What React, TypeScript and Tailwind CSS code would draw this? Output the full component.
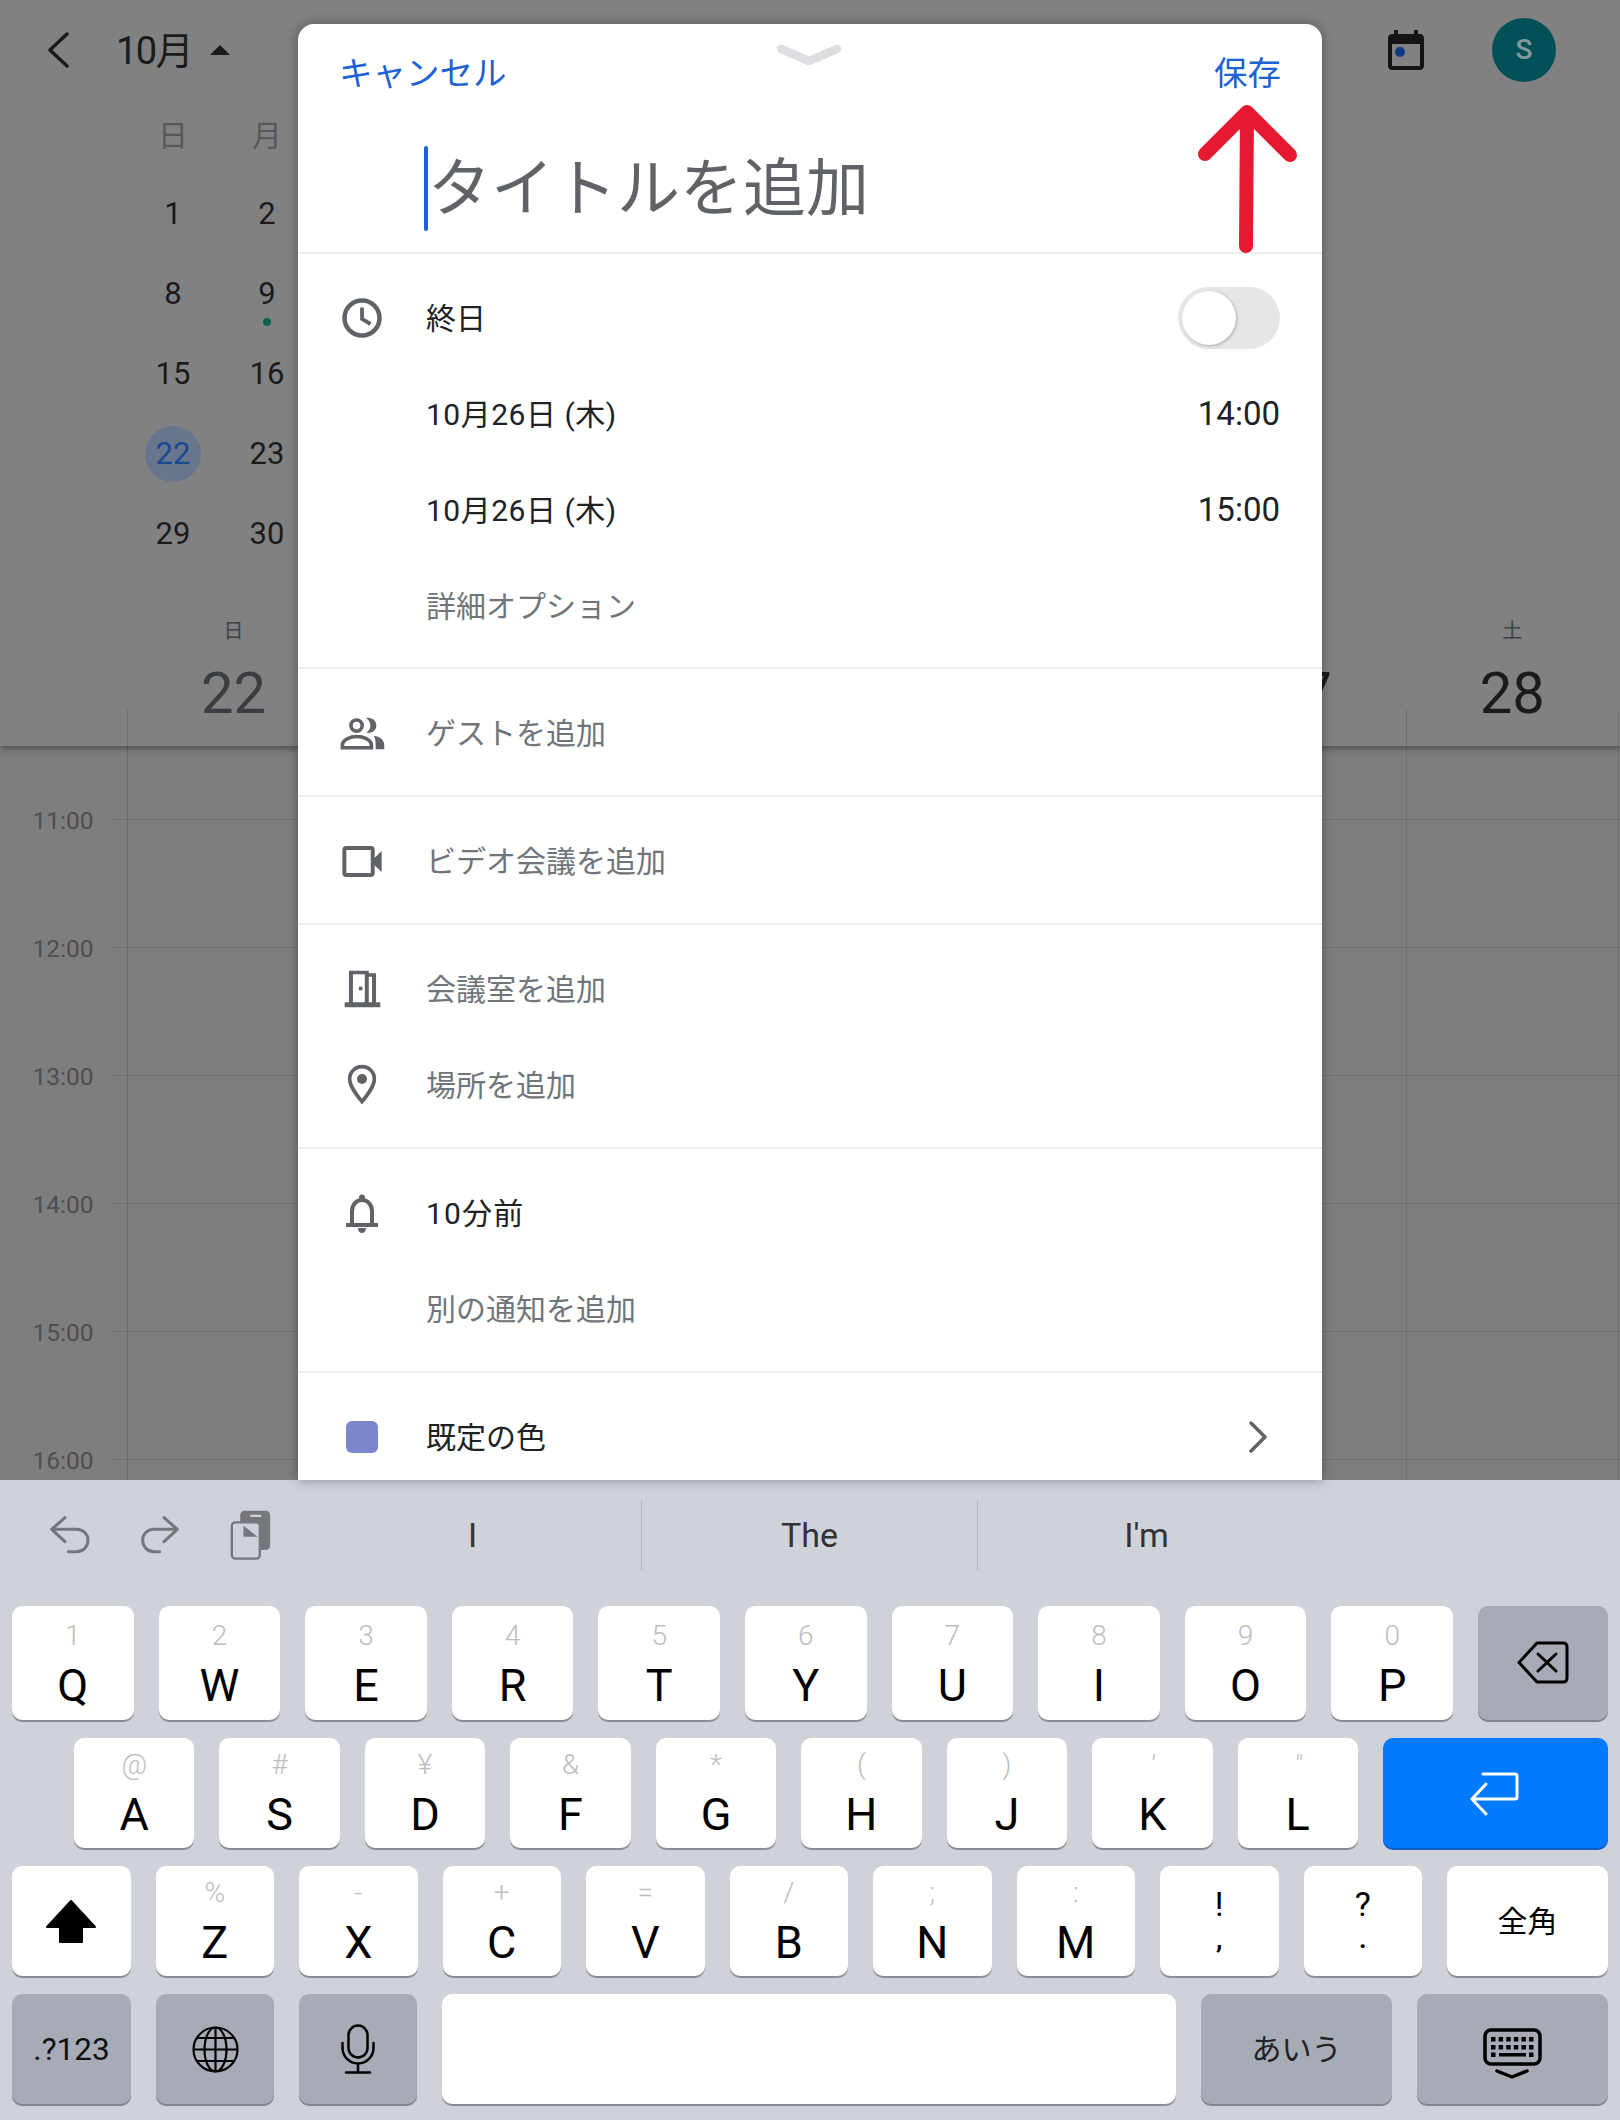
import React from 'react';

const dayNames = ['日', '月'];
const monthDays = [1, 2, 8, 9, 15, 16, 22, 23, 29, 30];
const stripDays = [
  { label: '日', num: '22', color: 'text-[#3a3d42]' },
  { label: '', num: '', color: '' },
  { label: '', num: '', color: '' },
  { label: '', num: '', color: '' },
  { label: '', num: '', color: '' },
  { label: '', num: '27', color: 'text-[#1b1b1b]' },
  { label: '土', num: '28', color: 'text-[#1b1b1b]' },
];
const hours = ['11:00', '12:00', '13:00', '14:00', '15:00', '16:00'];

const Clock = () => (
  <svg width="40" height="40" viewBox="0 0 40 40" fill="none" stroke="#5f6368" strokeWidth="4.500">
    <circle cx="20" cy="20" r="17.500" />
    <path d="M20 9.500V21l8.500 5" strokeWidth="3.800" />
  </svg>
);

const People = () => (
  <svg width="45" height="33" viewBox="28 82 136 100" fill="#5f6368">
    <circle cx="78" cy="108" r="17" fill="none" stroke="#5f6368" strokeWidth="11" />
    <path d="M107 85c18-3 31 9 31 23s-13 25-31 22c9-6 13-14 13-22s-4-17-13-23z" />
    <path d="M35 175v-7c0-18 27-27 44-27s44 9 44 27v7z" fill="none" stroke="#5f6368" strokeWidth="11" />
    <path d="M131 139c17 3 31 12 31 29v12h-26v-14c0-11-2-18-5-27z" />
  </svg>
);

const Video = () => (
  <svg width="42" height="33" viewBox="34 465 125 100" fill="#5f6368">
    <rect x="43" y="474" width="86" height="82" rx="6" fill="none" stroke="#5f6368" strokeWidth="12" />
    <path d="M130 508l26-25v64l-26-25z" />
  </svg>
);

const Door = () => (
  <svg width="37" height="38" viewBox="40 843 112 114" fill="#5f6368">
    <path d="M55 845h60v7h22v88h13v15H42v-15h13zm12 10v85h36v-85zm48 8v77h10v-77z" fillRule="evenodd" />
    <rect x="85" y="893" width="11" height="11" />
  </svg>
);

const Pin = () => (
  <svg width="30" height="42" viewBox="50 1125 90 126" fill="#5f6368">
    <path d="M95 1133c-21 0-37 16-37 37 0 22 21 48 37 68 16-20 37-46 37-68 0-21-16-37-37-37z" fill="none" stroke="#5f6368" strokeWidth="11" />
    <circle cx="95" cy="1170" r="15" />
  </svg>
);

const Bell = () => (
  <svg width="32" height="39" viewBox="0 0 32 39" fill="none" stroke="#5f6368">
    <circle cx="16" cy="3.500" r="3" fill="#5f6368" stroke="none" />
    <path d="M6 30V17C6 10.500 10.500 6 16 6s10 4.500 10 11v13" strokeWidth="4" />
    <path d="M0 31h32" strokeWidth="4" />
    <path d="M12 34h8c0 3-1.800 5-4 5s-4-2-4-5z" fill="#5f6368" stroke="none" />
  </svg>
);

const UndoIcon = () => (
  <svg width="40" height="40" viewBox="60 60 120 120" fill="none" stroke="#75777c" strokeWidth="9" strokeLinecap="round" strokeLinejoin="round">
    <path d="M105 68l-40 35 40 37M65 103h75c20 0 34 14 34 33s-14 34-34 34h-25" />
  </svg>
);

const RedoIcon = () => (
  <svg width="40" height="40" viewBox="330 60 120 120" fill="none" stroke="#75777c" strokeWidth="9" strokeLinecap="round" strokeLinejoin="round">
    <path d="M402 68l40 35-40 37M442 103h-70c-20 0-34 14-34 33s14 34 34 34h17" />
  </svg>
);

const PasteIcon = () => (
  <svg width="41" height="50" viewBox="600 45 122 150">
    <rect x="630" y="47" width="90" height="118" rx="13" fill="#75777c" />
    <rect x="660" y="59" width="33" height="7" rx="2" fill="#cfd2d9" />
    <rect x="605" y="82" width="84" height="109" rx="11" fill="#cfd2d9" stroke="#75777c" strokeWidth="7" />
    <path d="M640 92l42 33h-42z" fill="#75777c" />
  </svg>
);

const Backspace = () => (
  <svg width="52" height="44" viewBox="0 0 52 44" fill="none" stroke="#000" strokeWidth="3" strokeLinecap="round" strokeLinejoin="round">
    <path d="M20 2h26c2.500 0 4 1.500 4 4v31c0 2.500-1.500 4-4 4H20L2 21.500z" />
    <path d="M21 13l18 17M39 13L21 30" />
  </svg>
);

const ReturnIcon = () => (
  <svg width="52" height="45" viewBox="0 0 52 45" fill="none" stroke="#fff" strokeWidth="3" strokeLinecap="round" strokeLinejoin="round">
    <path d="M14 3h32c1.500 0 2 .5 2 2v21c0 1.500-.5 2-2 2H3M17 13L3 28l14 15" />
  </svg>
);

const ShiftIcon = () => (
  <svg width="50" height="43" viewBox="0 0 50 43" fill="#000" stroke="#000" strokeWidth="2" strokeLinejoin="round">
    <path d="M25 1L1 27h13v15h22V27h13z" />
  </svg>
);

const GlobeIcon = () => (
  <svg width="47" height="47" viewBox="0 0 47 47" fill="none" stroke="#000" strokeWidth="2.200">
    <circle cx="23.500" cy="23.500" r="22" />
    <ellipse cx="23.500" cy="23.500" rx="11" ry="22" />
    <path d="M23.500 1.500v44M1.500 23.500h44M5 12h37M5 35h37" />
  </svg>
);

const MicIcon = () => (
  <svg width="34" height="50" viewBox="0 0 34 50" fill="none" stroke="#000" strokeWidth="2.500" strokeLinecap="round">
    <rect x="7.500" y="1.500" width="19" height="32" rx="9.500" />
    <path d="M1.500 19v5a15.500 15.500 0 0 0 31 0v-5M17 39.500V48.500M5 48.500h24" />
  </svg>
);

const KeyboardIcon = () => (
  <svg width="60" height="60" viewBox="0 0 60 60" fill="#000">
    <rect x="2" y="2" width="55" height="34" rx="6" fill="none" stroke="#000" strokeWidth="3.500" />
    {[0, 1, 2, 3, 4, 5].map((i) => (
      <React.Fragment key={i}>
        <rect x={8 + i * 7.6} y="9" width="4.500" height="4.500" />
        <rect x={8 + i * 7.6} y="17" width="4.500" height="4.500" />
      </React.Fragment>
    ))}
    <rect x="8" y="24.500" width="4.500" height="4.500" />
    <rect x="16" y="25" width="27" height="3.500" />
    <rect x="46" y="24.500" width="4.500" height="4.500" />
    <path d="M14 43l15 6 15-6" fill="none" stroke="#000" strokeWidth="3.500" strokeLinecap="round" strokeLinejoin="round" />
  </svg>
);

function Row({ icon, children, right, muted }: { icon?: React.ReactNode; children: React.ReactNode; right?: React.ReactNode; muted?: boolean }) {
  return (
    <div className="flex h-[96px] items-center">
      <div className="flex w-[128px] shrink-0 justify-center">{icon}</div>
      <div className={muted ? 'text-[30px] text-[#70757a]' : 'text-[30px] text-[#202124]'}>{children}</div>
      {right && <div className="ml-auto pr-[42px]">{right}</div>}
    </div>
  );
}

function Key({ hint, main, first, className }: { hint?: string; main: string; first?: boolean; className: string }) {
  const slanted = hint === '′' || hint === '″';
  return (
    <div className={`flex flex-col items-center rounded-[10px] bg-white shadow-[0_2px_0_#8b8c91] ${first ? 'pt-[12px]' : 'pt-[9px]'} ${className}`}>
      <div className={`flex h-[36px] items-center text-[28px] font-light leading-none text-[#bdbdbd] ${slanted ? 'italic' : ''}`}>{hint}</div>
      <div className="flex h-[62px] items-center text-[45px] leading-none text-black">{main}</div>
    </div>
  );
}

function PunctKey({ top, bottom }: { top: string; bottom: string }) {
  return (
    <div className="flex flex-1 flex-col items-center rounded-[10px] bg-white pt-[18px] text-black shadow-[0_2px_0_#8b8c91]">
      <span className="text-[34px] leading-[40px]">{top}</span>
      <span className="text-[26px] font-bold leading-[30px]">{bottom}</span>
    </div>
  );
}

function DarkKey({ className, children }: { className: string; children: React.ReactNode }) {
  return (
    <div className={`flex items-center justify-center rounded-[10px] bg-[#a6abb5] shadow-[0_2px_0_#82858c] ${className}`}>
      {children}
    </div>
  );
}

export default function App() {
  const row1 = [['1', 'Q'], ['2', 'W'], ['3', 'E'], ['4', 'R'], ['5', 'T'], ['6', 'Y'], ['7', 'U'], ['8', 'I'], ['9', 'O'], ['0', 'P']];
  const row2 = [['@', 'A'], ['#', 'S'], ['¥', 'D'], ['&', 'F'], ['*', 'G'], ['(', 'H'], [')', 'J'], ['′', 'K'], ['″', 'L']];
  const row3 = [['%', 'Z'], ['-', 'X'], ['+', 'C'], ['=', 'V'], ['/', 'B'], [';', 'N'], [':', 'M']];

  return (
    <div className="flex h-[2120px] w-[1620px] flex-col overflow-hidden bg-[#7e7e7e] font-['Roboto','Noto_Sans_CJK_JP',sans-serif]">
      <div className="relative h-[1480px] shrink-0">
        {/* calendar behind the sheet */}
        <div className="relative z-10 h-[746px] bg-[#818181] shadow-[0_3px_6px_rgba(0,0,0,0.35)]">
          <div className="flex h-[100px] items-center pl-[47px] pr-[64px]">
            <svg width="22" height="36" viewBox="0 0 22 36" fill="none" stroke="#1b1b1b" strokeWidth="3.500" strokeLinecap="round" strokeLinejoin="round">
              <path d="M20 2L3 18l17 16" />
            </svg>
            <span className="ml-[47px] pt-[3px] text-[38px] tracking-[-1.5px] text-[#1b1b1b]">10月</span>
            <div className="ml-[18px] h-0 w-0 border-x-[10px] border-b-[10px] border-x-transparent border-b-[#1b1b1b]" />
            <svg className="ml-auto" width="36" height="40" viewBox="0 0 36 40" fill="#141414">
              <path d="M6 0h4v4h16V0h4v4h2c2.200 0 4 1.800 4 4v28c0 2.200-1.800 4-4 4H4c-2.200 0-4-1.800-4-4V8c0-2.200 1.800-4 4-4h2zM4 14v22h28V14z" fillRule="evenodd" />
              <circle cx="12" cy="22" r="5" fill="#0f3a85" />
            </svg>
            <div className="ml-[68px] flex h-[64px] w-[64px] items-center justify-center rounded-full bg-[#005057] text-[28px] font-medium text-[#829a9c]">
              S
            </div>
          </div>
          <div className="grid w-[314px] grid-cols-[repeat(2,94px)] pl-[126px]">
            {dayNames.map((d) => (
              <div key={d} className="flex h-[70px] items-center justify-center text-[30px] text-[#55585c]">{d}</div>
            ))}
          </div>
          <div className="grid w-[314px] grid-cols-[repeat(2,94px)] pl-[126px] pt-[4px]">
            {monthDays.map((d) => (
              <div key={d} className="relative flex h-[80px] items-center justify-center text-[31px] text-[#1b1b1b]">
                {d === 22 ? (
                  <div className="flex h-[56px] w-[56px] items-center justify-center rounded-full bg-[#67758d] text-[#1c4a8f]">{d}</div>
                ) : (
                  d
                )}
                {d === 9 && <div className="absolute bottom-[8px] h-[8px] w-[8px] rounded-full bg-[#0b5f55]" />}
              </div>
            ))}
          </div>
        </div>

        <div className="absolute left-0 top-[573px] z-10 w-full pl-[127px]">
          <div className="grid grid-cols-[repeat(7,213.14px)]">
            {stripDays.map((d, i) => (
              <div key={i} className="flex h-[89px] items-end justify-center pb-[16px] text-[20px] text-[#3f4246]">{d.label}</div>
            ))}
            {stripDays.map((d, i) => (
              <div key={i} className={`h-[48px] pt-[1px] text-center text-[58px] leading-[60px] ${d.color}`}>{d.num}</div>
            ))}
            {stripDays.map((d, i) => (
              <div key={i} className={i === 6 ? 'h-[36px] border-x border-[#6f6f6f]' : 'h-[36px] border-l border-[#6f6f6f]'} />
            ))}
          </div>
        </div>

        <div className="relative h-[734px] overflow-hidden pt-[73px]">
          {hours.map((h) => (
            <div key={h} className="flex h-[128px]">
              <div className="-mt-[15px] h-[34px] w-[126px] shrink-0 text-center text-[24.500px] leading-[34px] text-[#4c4f54]">{h}</div>
              <div className="-ml-[13px] flex-1 border-t border-[#6f6f6f]" />
            </div>
          ))}
          <div className="absolute inset-y-0 left-[127px] grid grid-cols-[repeat(7,213.14px)]">
            {stripDays.map((d, i) => (
              <div key={i} className={i === 6 ? 'border-x border-[#6f6f6f]' : 'border-l border-[#6f6f6f]'} />
            ))}
          </div>
        </div>

        {/* event sheet */}
        <div className="absolute bottom-0 left-[298px] top-[24px] z-20 w-[1024px] overflow-hidden rounded-t-[16px] bg-white shadow-[0_0_12px_rgba(0,0,0,0.35)]">
          <div className="relative h-[230px] border-b-2 border-[#ececef]">
            <div className="flex h-[100px] items-center justify-between pl-[41px] pr-[41px] text-[33.500px] text-[#1a62d6]">
              <span>キャンセル</span>
              <span>保存</span>
            </div>
            <svg className="absolute left-[478px] top-[20px]" width="66" height="26" viewBox="0 0 66 26" fill="none" stroke="#dddee2" strokeWidth="8.500" strokeLinecap="round" strokeLinejoin="round">
              <path d="M5 5l28 12 28-12" />
            </svg>
            <div className="flex h-[128px] items-center pl-[126px]">
              <div className="h-[85px] w-[4px] rounded-full bg-[#1a62d6]" />
              <span className="text-[63px] leading-none text-[#5f6368]">タイトルを追加</span>
            </div>
            <svg className="absolute left-[900px] top-[76px]" width="99" height="160" viewBox="0 0 99 160" fill="none" stroke="#e5192f" strokeWidth="14" strokeLinecap="round" strokeLinejoin="round">
              <path d="M7 54l42-42 43 43M49 12l-1 134" />
            </svg>
          </div>

          <div className="border-b-2 border-[#ececef] pb-[13px] pt-[16px]">
            <Row
              icon={<Clock />}
              right={
                <div className="relative h-[62px] w-[102px] rounded-full bg-[#e6e6e8]">
                  <div className="absolute left-[4px] top-[4px] h-[54px] w-[54px] rounded-full bg-white shadow-[1px_1px_3px_rgba(0,0,0,0.25)]" />
                </div>
              }
            >
              終日
            </Row>
            <Row right={<span className="text-[33px] text-[#202124]">14:00</span>}>
              <span className="tracking-[0.5px]">10月26日 (木)</span>
            </Row>
            <Row right={<span className="text-[33px] text-[#202124]">15:00</span>}>
              <span className="tracking-[0.5px]">10月26日 (木)</span>
            </Row>
            <Row muted>詳細オプション</Row>
          </div>

          <div className="border-b-2 border-[#ececef] pb-[14px] pt-[16px]">
            <Row icon={<People />} muted>ゲストを追加</Row>
          </div>
          <div className="border-b-2 border-[#ececef] pb-[14px] pt-[16px]">
            <Row icon={<Video />} muted>ビデオ会議を追加</Row>
          </div>
          <div className="border-b-2 border-[#ececef] pb-[14px] pt-[16px]">
            <Row icon={<Door />} muted>会議室を追加</Row>
            <Row icon={<Pin />} muted>場所を追加</Row>
          </div>
          <div className="border-b-2 border-[#ececef] pb-[14px] pt-[16px]">
            <Row icon={<Bell />}>
              <span className="tracking-[1.2px]">10分前</span>
            </Row>
            <Row muted>別の通知を追加</Row>
          </div>
          <div className="py-[16px]">
            <Row
              icon={<div className="h-[32px] w-[32px] rounded-[6px] bg-[#7b86cc]" />}
              right={
                <svg className="mr-[12px]" width="20" height="32" viewBox="0 0 20 32" fill="none" stroke="#5f6368" strokeWidth="3.500" strokeLinecap="round" strokeLinejoin="round">
                  <path d="M3 2l14 14L3 30" />
                </svg>
              }
            >
              既定の色
            </Row>
          </div>
        </div>
      </div>

      {/* keyboard */}
      <div className="flex flex-1 flex-col bg-[#cfd2d9]">
        <div className="flex h-[126px] shrink-0">
          <div className="flex h-[110px] w-[304px] shrink-0 items-center gap-[50px] pl-[50px]">
            <UndoIcon />
            <RedoIcon />
            <PasteIcon />
          </div>
          <div className="mt-[20px] flex h-[70px] w-[337px] items-center justify-center text-[34px] text-[#333]">I</div>
          <div className="mt-[20px] flex h-[70px] w-[337px] items-center justify-center border-x border-[#b4b7be] text-[34px] text-[#333]">The</div>
          <div className="mt-[20px] flex h-[70px] w-[337px] items-center justify-center text-[34px] text-[#333]">I′m</div>
        </div>

        <div className="flex h-[114px] gap-[25px] px-[12px]">
          {row1.map(([h, m]) => (
            <Key key={m} hint={h} main={m} first className="flex-1" />
          ))}
          <DarkKey className="w-[130px]"><Backspace /></DarkKey>
        </div>

        <div className="mt-[18px] flex h-[110px] gap-[25px] pl-[74px] pr-[12px]">
          {row2.map(([h, m]) => (
            <Key key={m} hint={h} main={m} className="flex-1" />
          ))}
          <div className="flex w-[225px] items-center justify-center rounded-[10px] bg-[#007aff] shadow-[0_2px_0_#0a5fc0]">
            <ReturnIcon />
          </div>
        </div>

        <div className="mt-[18px] flex h-[110px] gap-[25px] px-[12px]">
          <div className="flex flex-1 items-center justify-center rounded-[10px] bg-white shadow-[0_2px_0_#8b8c91]">
            <ShiftIcon />
          </div>
          {row3.map(([h, m]) => (
            <Key key={m} hint={h} main={m} className="flex-1" />
          ))}
          <PunctKey top="!" bottom="," />
          <PunctKey top="?" bottom="." />
          <div className="flex w-[161px] items-center justify-center rounded-[10px] bg-white text-[30px] text-black shadow-[0_2px_0_#8b8c91]">全角</div>
        </div>

        <div className="mt-[18px] flex h-[110px] gap-[25px] px-[12px]">
          <DarkKey className="w-[119px] pt-[2px] text-[31.500px] text-[#111]">.?123</DarkKey>
          <DarkKey className="w-[118px]"><GlobeIcon /></DarkKey>
          <DarkKey className="w-[118px]"><MicIcon /></DarkKey>
          <div className="flex-1 rounded-[10px] bg-white shadow-[0_2px_0_#8b8c91]" />
          <DarkKey className="w-[191px] text-[30px] text-[#222]">あいう</DarkKey>
          <DarkKey className="w-[191px] pt-[18px]"><KeyboardIcon /></DarkKey>
        </div>
      </div>
    </div>
  );
}
